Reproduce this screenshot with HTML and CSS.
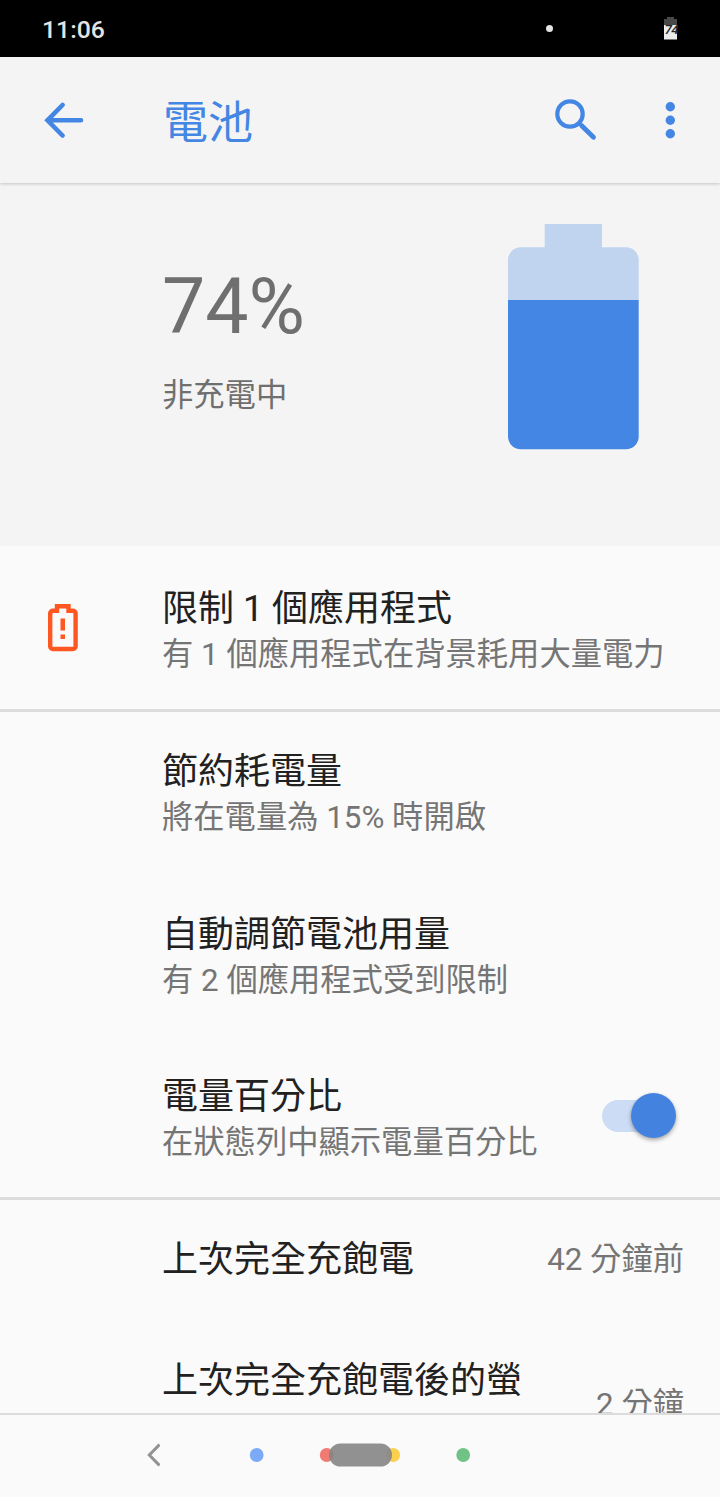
FILE: index.html
```html
<!DOCTYPE html>
<html lang="zh-Hant">
<head>
<meta charset="utf-8">
<title>電池</title>
<link rel="stylesheet" href="styles.css">
</head>
<body>
<div class="screen">
  <div class="status">
    <span class="clock">11:06</span>
    <span class="notice"></span>
    <svg class="status-battery" width="14" height="24" viewBox="0 0 14 24">
      <path d="M3 0h7v2h3v6H0V2h3z" fill="#484848"/>
      <path d="M0 8h13v14.500H0z" fill="#ececec"/>
      <text class="status-level" x="0.400" y="16.500">74</text>
    </svg>
  </div>
  <header class="appbar">
    <svg class="back" width="40" height="36" viewBox="0 0 40 36">
      <path d="M18.500 3 3.500 18.300l15 15.200M3.500 18.300H37" fill="none" stroke="#4486e3" stroke-width="4.600" stroke-linecap="round"/>
    </svg>
    <h1 class="title">電池</h1>
    <svg class="search" width="42" height="42" viewBox="0 0 42 42">
      <circle cx="15" cy="15" r="12.700" fill="none" stroke="#4486e3" stroke-width="4.200"/>
      <path d="M26.500 26.500 38.500 38.200" stroke="#4486e3" stroke-width="4.800" stroke-linecap="round"/>
    </svg>
    <svg class="more" width="10" height="38" viewBox="0 0 10 38">
      <g fill="#4486e3"><circle cx="5.300" cy="5.800" r="4.700"/><circle cx="5.300" cy="19.300" r="4.700"/><circle cx="5.300" cy="32.800" r="4.700"/></g>
    </svg>
  </header>
  <section class="hero">
    <div class="level">
      <div class="percent">74%</div>
      <div class="state">非充電中</div>
    </div>
    <svg class="battery" width="131" height="226" viewBox="0 0 131 226">
      <path d="M36.700 0H94v23.300h24a12.700 12.700 0 0 1 12.700 12.700V76H0V36a12.700 12.700 0 0 1 12.700-12.700h24z" fill="#c0d3ef"/>
      <path d="M0 76h130.700v136.500a12.700 12.700 0 0 1-12.700 12.700H12.700A12.700 12.700 0 0 1 0 212.500z" fill="#4486e3"/>
    </svg>
  </section>
  <main class="list">
    <div class="row alert">
      <svg class="warn" width="30" height="48" viewBox="0 0 30 48">
        <path d="M9 2.200h11.500v4.600H25a2.600 2.600 0 0 1 2.600 2.600v33a2.600 2.600 0 0 1-2.600 2.600H4.800a2.600 2.600 0 0 1-2.600-2.600v-33a2.600 2.600 0 0 1 2.600-2.600H9z" fill="none" stroke="#ff5722" stroke-width="4.400"/>
        <path d="M12.500 14.500H17v12h-4.500zM12.500 30.500H17V35h-4.500z" fill="#ff5722"/>
      </svg>
      <div class="text"><div class="name">限制 1 個應用程式</div><div class="sub">有 1 個應用程式在背景耗用大量電力</div></div>
    </div>
    <div class="group">
      <div class="row"><div class="text"><div class="name">節約耗電量</div><div class="sub">將在電量為 15% 時開啟</div></div></div>
      <div class="row"><div class="text"><div class="name">自動調節電池用量</div><div class="sub">有 2 個應用程式受到限制</div></div></div>
      <div class="row"><div class="text"><div class="name">電量百分比</div><div class="sub">在狀態列中顯示電量百分比</div></div>
        <div class="switch"><span class="thumb"></span></div></div>
    </div>
    <div class="group">
      <div class="row single"><div class="name">上次完全充飽電</div><div class="value">42 分鐘前</div></div>
      <div class="row last"><div class="name">上次完全充飽電後的螢</div><div class="value late">2 分鐘</div></div>
    </div>
  </main>
  <nav class="navbar">
    <svg class="nav-back" width="14" height="24" viewBox="0 0 14 24">
      <path d="M13.500 1.500 3.300 12l10.200 10.500" fill="none" stroke="#929292" stroke-width="3"/>
    </svg>
    <svg class="assist" width="222" height="24" viewBox="0 0 222 24">
      <circle cx="7.700" cy="12" r="6.900" fill="#7baaf7"/>
      <circle cx="77.700" cy="12" r="6.900" fill="#f07b72"/>
      <circle cx="144.200" cy="12" r="6.900" fill="#fcd04f"/>
      <circle cx="214.200" cy="12" r="6.900" fill="#71c287"/>
      <rect x="80" y="0.500" width="63" height="23" rx="11.500" fill="#858585" fill-opacity=".9"/>
    </svg>
  </nav>
</div>
</body>
</html>
```

FILE: styles.css
```css
* { box-sizing: border-box; }
body { margin: 0; font-family: Roboto, "Noto Sans CJK TC", sans-serif; color: #212121; }
.screen { width: 720px; height: 1497px; display: flex; flex-direction: column; overflow: hidden; background: #fafafa; }
.status { flex: none; height: 57px; background: #000; display: flex; align-items: center; padding: 0 42px; color: #e4e4e4; }
.clock { width: 504px; font-size: 24.800px; font-weight: 500; line-height: 30px; margin-top: 3px; }
.notice { width: 7px; height: 7px; border-radius: 50%; background: #e4e4e4; }
.status-battery { margin-left: 111px; }
.status-level { font: italic 500 13.500px Roboto, sans-serif; fill: #252525; letter-spacing: -.5px; }
.appbar { flex: none; height: 126px; background: #f4f4f4; display: flex; align-items: center; padding-left: 44px; box-shadow: 0 1px 3px rgba(0,0,0,.2); z-index: 1; }
.title { margin: 8px 0 0 79px; width: 392px; font-size: 45px; font-weight: 400; line-height: 60px; color: #4486e3; }
.more { margin-left: 68px; }
.hero { flex: none; height: 363px; background: #f4f4f4; display: flex; align-items: flex-start; padding: 41px 81px 0 162px; }
.level { flex: 1; color: #6f6f6f; padding-top: 38px; }
.percent { font-size: 77px; line-height: 90px; }
.state { font-size: 31.300px; line-height: 40px; margin-top: 24px; }
.list { flex: 1; min-height: 0; overflow: hidden; }
.row { height: 162.700px; padding: 37px 36px 0 162px; display: flex; align-items: flex-start; justify-content: space-between; white-space: nowrap; }
.alert { height: 163px; padding-top: 40px; padding-left: 48px; justify-content: flex-start; }
.warn { margin: 18px 84px 0 0; }
.name { font-size: 36px; line-height: 46px; }
.sub, .value { font-size: 31.300px; line-height: 46px; color: #757575; }
.group { border-top: 3px solid #dcdcdc; }
.group + .group { margin-top: -3px; }
.switch { width: 74px; height: 45px; margin-top: 19px; margin-right: 8px; display: flex; align-items: center; position: relative; }
.switch::before { content: ""; width: 60px; height: 32px; border-radius: 16px; background: #ccdcf4; }
.thumb { position: absolute; right: 0; top: 0; width: 45px; height: 45px; border-radius: 50%; background: #4382df; box-shadow: 0 2px 4px rgba(0,0,0,.35); }
.single { height: 121px; }
.late { margin-top: 24px; }
.navbar { flex: none; height: 84px; border-top: 2px solid #dcdcdc; background: #fafafa; display: flex; align-items: center; padding: 0 0 2px 146px; }
.assist { margin-left: 89px; }
```
